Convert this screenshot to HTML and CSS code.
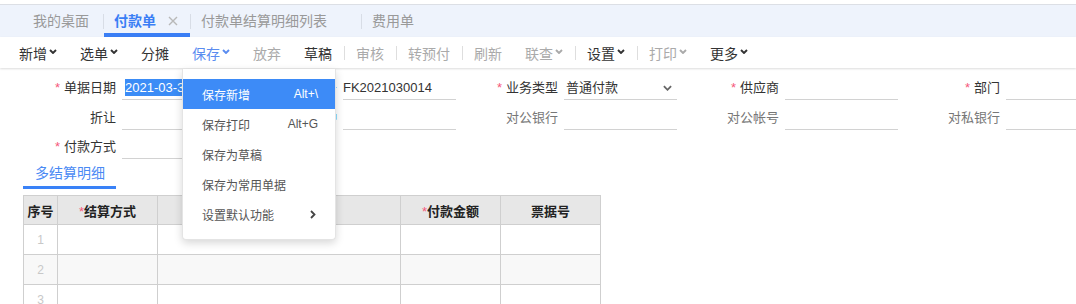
FILE: index.html
```html
<!DOCTYPE html>
<html lang="zh-CN">

<head>
    <meta charset="UTF-8">
    <meta name="viewport" content="width=device-width, initial-scale=1.0">
    <title>付款单</title>
    <link rel="stylesheet" href="styles.css">
</head>

<body>

    <div class="tabs">
        <div class="tab home">我的桌面</div>
        <i class="tab-sep"></i>
        <div class="tab active">付款单<svg class="close" viewBox="0 0 10 10"><path d="M1 1L9 9M9 1L1 9" /></svg></div>
        <i class="tab-sep"></i>
        <div class="tab">付款单结算明细列表<svg class="close hide" viewBox="0 0 10 10"><path d="M1 1L9 9M9 1L1 9" /></svg></div>
        <i class="tab-sep"></i>
        <div class="tab">费用单<svg class="close hide" viewBox="0 0 10 10"><path d="M1 1L9 9M9 1L1 9" /></svg></div>
    </div>

    <div class="toolbar">
        <div class="tb-item">新增<svg class="caret" viewBox="0 0 8 5"><path d="M1 1L4 4L7 1" /></svg></div>
        <div class="tb-item">选单<svg class="caret" viewBox="0 0 8 5"><path d="M1 1L4 4L7 1" /></svg></div>
        <div class="tb-item">分摊</div>
        <div class="tb-item on">保存<svg class="caret" viewBox="0 0 8 5"><path d="M1 1L4 4L7 1" /></svg>
            <div class="menu">
                <div class="menu-item hover"><span>保存新增</span><span class="key">Alt+\</span></div>
                <div class="menu-item"><span>保存打印</span><span class="key">Alt+G</span></div>
                <div class="menu-item"><span>保存为草稿</span></div>
                <div class="menu-item"><span>保存为常用单据</span></div>
                <div class="menu-item"><span>设置默认功能</span><svg class="more" viewBox="0 0 6 9"><path d="M1 1L4.5 4.5L1 8" /></svg></div>
            </div>
        </div>
        <div class="tb-item off">放弃</div>
        <div class="tb-item">草稿</div>
        <i class="tb-sep"></i>
        <div class="tb-item off">审核</div>
        <i class="tb-sep"></i>
        <div class="tb-item off">转预付</div>
        <i class="tb-sep"></i>
        <div class="tb-item off">刷新</div>
        <div class="tb-item off">联查<svg class="caret" viewBox="0 0 8 5"><path d="M1 1L4 4L7 1" /></svg></div>
        <i class="tb-sep"></i>
        <div class="tb-item">设置<svg class="caret" viewBox="0 0 8 5"><path d="M1 1L4 4L7 1" /></svg></div>
        <i class="tb-sep"></i>
        <div class="tb-item off">打印<svg class="caret" viewBox="0 0 8 5"><path d="M1 1L4 4L7 1" /></svg></div>
        <div class="tb-item">更多<svg class="caret" viewBox="0 0 8 5"><path d="M1 1L4 4L7 1" /></svg></div>
    </div>

    <div class="form">
        <div class="row">
            <div class="field"><label class="req">单据日期</label><div class="input"><span class="sel">2021-03-31</span></div></div>
            <div class="field"><label>单据编号</label><div class="input">FK2021030014</div></div>
            <div class="field"><label class="req">业务类型</label><div class="input select">普通付款<svg class="drop" viewBox="0 0 10 6"><path d="M1 1L5 5L9 1" /></svg></div></div>
            <div class="field"><label class="req">供应商</label><div class="input"></div></div>
            <div class="field"><label class="req">部门</label><div class="input"></div></div>
        </div>
        <div class="row mid">
            <div class="field"><label>折让</label><div class="input"></div></div>
            <div class="field"><label class="link">结算币种</label><div class="input"></div></div>
            <div class="field"><label class="sub">对公银行</label><div class="input"></div></div>
            <div class="field"><label class="sub">对公帐号</label><div class="input"></div></div>
            <div class="field"><label class="sub">对私银行</label><div class="input"></div></div>
        </div>
        <div class="row">
            <div class="field"><label class="req">付款方式</label><div class="input"></div></div>
        </div>
    </div>

    <div class="subtabs">
        <div class="subtab">多结算明细</div>
    </div>

    <table class="grid">
        <colgroup>
            <col style="width: 34px">
            <col style="width: 100px">
            <col style="width: 243px">
            <col style="width: 100px">
            <col style="width: 100px">
        </colgroup>
        <thead>
            <tr>
                <th>序号</th>
                <th><span class="star">*</span>结算方式</th>
                <th>结算账户</th>
                <th><span class="star">*</span>付款金额</th>
                <th>票据号</th>
            </tr>
        </thead>
        <tbody>
            <tr><td class="num">1</td><td></td><td></td><td></td><td></td></tr>
            <tr class="even"><td class="num">2</td><td></td><td></td><td></td><td></td></tr>
            <tr><td class="num">3</td><td></td><td></td><td></td><td></td></tr>
        </tbody>
    </table>

</body>

</html>
```

FILE: styles.css
```css
* {
    margin: 0;
    padding: 0;
    box-sizing: border-box;
}

body {
    font-family: "Liberation Sans", "Noto Sans CJK SC", sans-serif;
    font-size: 13px;
    color: #333;
    background: #fff;
    width: 1076px;
    height: 304px;
    overflow: hidden;
    padding-top: 4px;
}

/* 顶部页签 */
.tabs {
    display: flex;
    align-items: center;
    height: 33px;
    padding-left: 23px;
    background: #eef3fc;
    border-top: 1px solid #dcdfe5;
}

.tab {
    display: flex;
    align-items: center;
    height: 100%;
    padding: 0 12px 0 10px;
    font-size: 14px;
    line-height: 20px;
    color: #999;
    white-space: nowrap;
}

.tab.home {
    padding-right: 14px;
}

.tab.active {
    color: #3a7ef5;
    font-weight: bold;
    box-shadow: inset 0 -4px 0 #3a7ef5;
}

.tab-sep {
    width: 1px;
    height: 15px;
    background: #d8dde6;
}

.close {
    width: 10px;
    height: 10px;
    margin-left: 12px;
    fill: none;
    stroke: #b8b8b8;
    stroke-width: 1.4;
}

.close.hide {
    visibility: hidden;
}

/* 工具栏 */
.toolbar {
    display: flex;
    align-items: center;
    height: 31px;
    padding-left: 8px;
    background: #fff;
    box-shadow: 0 1px 2px rgba(0, 0, 0, .14);
    position: relative;
    z-index: 5;
}

.tb-item {
    display: flex;
    align-items: center;
    height: 100%;
    padding: 0 11px;
    margin-right: 1px;
    font-size: 14px;
    color: #333;
    white-space: nowrap;
    position: relative;
}

.tb-item.off {
    color: #aaa;
}

.tb-item.on {
    color: #5a8cf0;
}

.caret {
    width: 8px;
    height: 5px;
    margin-left: 2px;
    margin-top: -3px;
    fill: none;
    stroke: currentColor;
    stroke-width: 1.9;
}

.tb-sep {
    width: 1px;
    height: 14px;
    background: #dedede;
}

/* 保存下拉菜单 */
.menu {
    position: absolute;
    top: 32px;
    left: 1px;
    width: 154px;
    padding: 10px 0;
    background: #fff;
    border: 1px solid #e4e4e4;
    border-top: none;
    border-radius: 0 0 4px 4px;
    box-shadow: 0 3px 8px rgba(0, 0, 0, .16);
}

.menu-item {
    display: flex;
    justify-content: space-between;
    align-items: center;
    height: 30px;
    padding: 0 17px 0 19px;
    font-size: 12px;
    color: #555;
}

.menu-item.hover {
    background: #3d8bf7;
    color: #fff;
}

.menu-item .key {
    font-size: 12px;
}

.more {
    width: 6px;
    height: 9px;
    margin-right: 2px;
    fill: none;
    stroke: #444;
    stroke-width: 1.8;
}

/* 表头字段 */
.form {
    padding: 3px 0 1px 19px;
}

.row {
    display: flex;
    align-items: flex-end;
    height: 29px;
}

.row.mid {
    height: 30px;
}

.field {
    display: flex;
    width: 217px;
    margin-right: 4px;
    flex-shrink: 0;
}

.field label {
    width: 103px;
    padding-right: 6px;
    text-align: right;
    line-height: 22px;
    color: #333;
    white-space: nowrap;
}

.field label.sub {
    color: #777;
}

.field label.link {
    color: #3a7ef5;
}

.req::before {
    content: "*";
    color: #f5587b;
    margin-right: 4px;
}

.input {
    width: 113px;
    height: 23px;
    line-height: 22px;
    border-bottom: 1px solid #d2d2d2;
    color: #333;
    white-space: nowrap;
    overflow: hidden;
}

.input.select {
    display: flex;
    justify-content: space-between;
    align-items: center;
    padding: 0 5px 0 2px;
}

.drop {
    width: 9px;
    height: 6px;
    fill: none;
    stroke: #666;
    stroke-width: 2;
}

.sel {
    margin-left: 3px;
    background: #3b8cf6;
    color: #fff;
    padding: 1px 0;
}

/* 明细页签 */
.subtabs {
    display: flex;
    height: 29px;
    padding-left: 23px;
}

.subtab {
    padding: 0 11px 0 12px;
    line-height: 26px;
    font-size: 14px;
    color: #4a8af4;
    box-shadow: inset 0 -3px 0 #3a82f7;
}

/* 明细表格 */
.grid {
    margin: 6px 0 0 23px;
    border-collapse: collapse;
    table-layout: fixed;
    width: 577px;
}

.grid th,
.grid td {
    border: 1px solid #cfcfcf;
}

.grid th {
    height: 29px;
    background: #e7e7e7;
    font-size: 13px;
    font-weight: bold;
    color: #222;
}

.grid td {
    height: 30px;
}

.grid .even td {
    background: #f8f8f8;
}

.grid td.num {
    text-align: center;
    font-size: 12px;
    color: #c8c8c8;
}

.star {
    color: #f5587b;
    font-weight: normal;
}
```
